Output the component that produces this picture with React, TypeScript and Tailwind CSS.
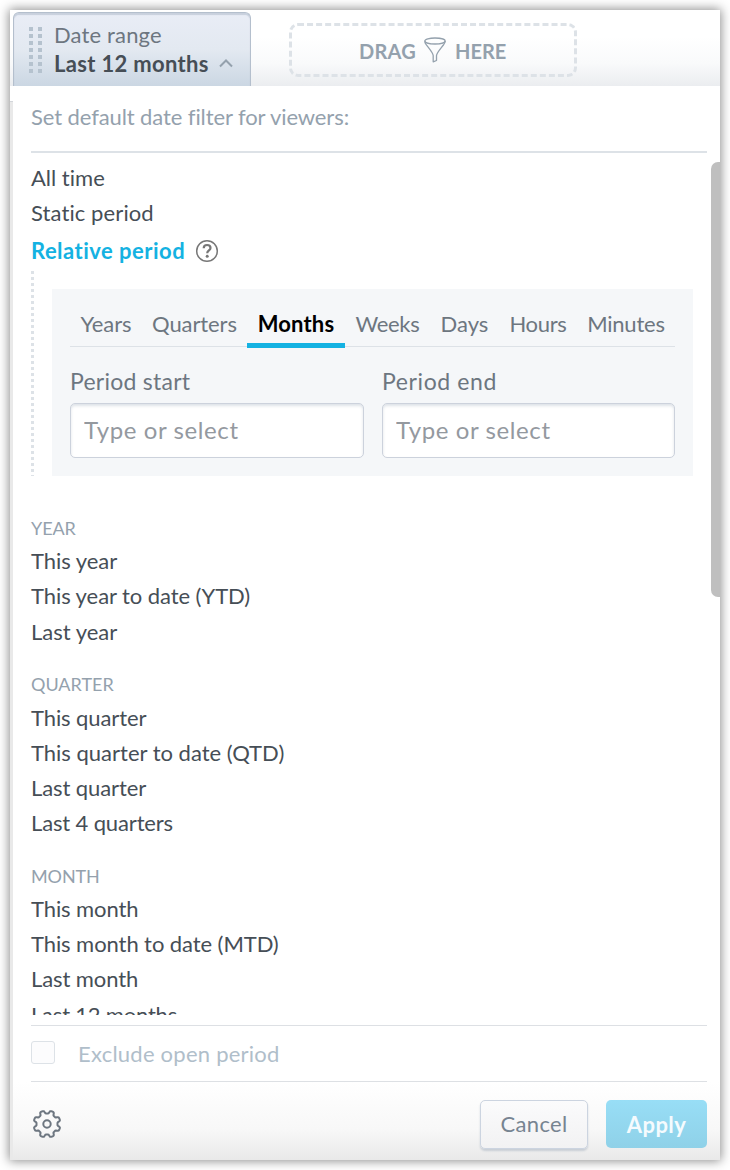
import React from 'react';

type Option = { label: string; track: string };
type Section = { title: string; track: string; options: Option[] };

const tabs = [
  { label: 'Years', box: 'w-[72px]', track: 'tracking-[-0.1px]' },
  { label: 'Quarters', box: 'w-[105px]', track: 'tracking-[-0.1px]' },
  { label: 'Months', box: 'w-[98px]', track: 'tracking-[0.15px]' },
  { label: 'Weeks', box: 'w-[85px]', track: 'tracking-[-0.3px]' },
  { label: 'Days', box: 'w-[69px]', track: '' },
  { label: 'Hours', box: 'w-[78px]', track: 'tracking-[-0.3px]' },
  { label: 'Minutes', box: 'w-[98px]', track: 'tracking-[-0.2px]' },
];

const sections: Section[] = [
  {
    title: 'YEAR',
    track: 'tracking-[-0.1px]',
    options: [
      { label: 'This year', track: 'tracking-[-0.05px]' },
      { label: 'This year to date (YTD)', track: 'tracking-[-0.07px]' },
      { label: 'Last year', track: '' },
    ],
  },
  {
    title: 'QUARTER',
    track: '',
    options: [
      { label: 'This quarter', track: 'tracking-[-0.1px]' },
      { label: 'This quarter to date (QTD)', track: '' },
      { label: 'Last quarter', track: 'tracking-[-0.1px]' },
      { label: 'Last 4 quarters', track: 'tracking-[-0.14px]' },
    ],
  },
  {
    title: 'MONTH',
    track: 'tracking-[-0.1px]',
    options: [
      { label: 'This month', track: 'tracking-[-0.1px]' },
      { label: 'This month to date (MTD)', track: 'tracking-[-0.08px]' },
      { label: 'Last month', track: 'tracking-[-0.1px]' },
      { label: 'Last 12 months', track: 'tracking-[-0.2px]' },
    ],
  },
];

function DragHandle() {
  return (
    <div className="grid grid-cols-2 gap-x-[5px] gap-y-[3px] self-start">
      {Array.from({ length: 14 }, (_, i) => (
        <span key={i} className="size-1 bg-[#b5c2ce]" />
      ))}
    </div>
  );
}

function Funnel() {
  return (
    <svg width="22" height="26" viewBox="0 0 22 26" fill="none" stroke="#94a1ad" strokeWidth="1.300" strokeLinejoin="round">
      <ellipse cx="11" cy="4" rx="10.2" ry="3" />
      <path d="M.8 4.2c0 1.6.7 2.500 1.600 3.700C4.800 11.200 8.800 15.500 9.200 18.500v6.300l3.300-1.300v-5c.5-3 4.500-7.200 6.900-10.500.9-1.200 1.800-2.200 1.800-3.900" />
    </svg>
  );
}

function Gear() {
  const points = Array.from({ length: 193 }, (_, i) => {
    const a = (i / 192) * Math.PI * 2;
    const wave = Math.tanh(2.6 * Math.cos(8 * a + Math.PI)) / Math.tanh(2.6);
    const r = 12 + 1.5 * wave;
    return `${(15 + r * Math.cos(a)).toFixed(2)},${(15 + r * Math.sin(a)).toFixed(2)}`;
  }).join(' ');
  return (
    <svg width="30" height="30" viewBox="0 0 30 30" fill="none" stroke="#6d7680" strokeWidth="2" strokeLinejoin="round">
      <polygon points={points} />
      <circle cx="15" cy="15" r="3.700" />
    </svg>
  );
}

function PeriodField({ label, box, track }: { label: string; box: string; track: string }) {
  return (
    <label className={`flex flex-col ${box}`}>
      <span className={`h-[35px] text-[23px] leading-[34px] text-[#6d7680] ${track}`}>{label}</span>
      <input
        placeholder="Type or select"
        className="mt-[4px] h-[55px] w-full rounded-[5px] border border-[#ccd2dc] bg-white px-[13px] pb-[2px] text-[24px] tracking-[0.6px] text-[#464e56] shadow-[inset_0_2px_3px_rgba(20,56,93,0.14)] outline-none placeholder:text-[#94999f]"
      />
    </label>
  );
}

export default function App() {
  return (
    <div className="h-[1170px] w-[730px] overflow-hidden bg-white p-[10px] font-['Lato','Liberation_Sans',sans-serif] text-[22px] text-[#464e56] [font-variant-ligatures:none]">
      <div className="flex h-[1150px] w-[710px] flex-col bg-white shadow-[0_0_10px_1px_rgba(0,0,0,0.45)]">
        <header className="flex h-[76px] shrink-0 items-start bg-linear-to-b from-white from-35% via-[#f9fafb] via-70% to-[#ebedf0] pl-[3px] pt-[2px]">
          <div className="flex h-[74px] w-[238px] rounded-t-[6px] border border-b-0 border-[#b4bfcd] bg-linear-to-b from-[#e9edf6] via-[#e3e9f1] to-[#cbd7e3] pl-[15px] pt-[14px] shadow-[inset_0_2px_1px_rgba(150,165,185,0.4)]">
            <DragHandle />
            <div className="ml-[12px] mt-[-7px] flex flex-col">
              <span className="h-[29px] leading-[29px] tracking-[0.15px] text-[#6d7680]">Date range</span>
              <div className="flex h-[29px] items-center">
                <span className="w-[154px] whitespace-nowrap font-bold leading-[29px] tracking-[0.32px]">Last 12 months</span>
                <svg className="ml-[11px]" width="14" height="9" viewBox="0 0 14 9" fill="none" stroke="#94a1ad" strokeWidth="2">
                  <path d="M1 7.500 7 1.500l6 6" />
                </svg>
              </div>
            </div>
          </div>
          <div className="ml-[38px] mt-[11px] flex h-[54px] w-[288px] items-center rounded-[9px] border-[3px] border-dashed border-[#dde2e7] pl-[67px] pt-[1px] text-[20px] font-bold text-[#94a1ad]">
            <span className="w-[57px] tracking-[0.2px]">DRAG</span>
            <span className="ml-[8px] mt-[-2px]"><Funnel /></span>
            <span className="ml-[9px]">HERE</span>
          </div>
        </header>

        <div className="flex min-h-0 flex-1">
          <div className="w-[3px] shrink-0 pt-[15px]">
            <div className="h-full border-t border-[#d3d6da] bg-[#e9e9e9]" />
          </div>
          <div className="flex min-w-0 flex-1 flex-col">
            <div className="mx-[18px] mr-[13px] h-[67px] shrink-0 border-b-2 border-[#dde2e7] pt-[13px] leading-[35px] tracking-[-0.1px] text-[#94a1ad]">
              Set default date filter for viewers:
            </div>

            <div className="flex h-[862px] shrink-0 justify-between">
              <div className="h-full overflow-hidden pl-[18px] pt-[7px]">
                <div className="h-[35px] leading-[35px]">All time</div>
                <div className="h-[36px] leading-[35px] tracking-[0.1px]">Static period</div>
                <div className="flex h-[40px] items-start font-bold leading-[39px] text-[#14b2e2]">
                  <span className="w-[164px] tracking-[0.48px]">Relative period</span>
                  <svg className="mt-[8px]" width="24" height="24" viewBox="0 0 24 24" fill="none" stroke="#777" strokeWidth="1.500">
                    <circle cx="12" cy="12" r="10.300" />
                    <path d="M8.700 9.200c0-2 1.400-3.200 3.400-3.200s3.400 1.200 3.400 2.900c0 2.400-3.300 2.600-3.300 5.300" strokeWidth="2.200" />
                    <circle cx="12.200" cy="17.300" r="1.500" fill="#777" stroke="none" />
                  </svg>
                </div>
                <div className="flex h-[205px]">
                  <div className="w-[3px] bg-[repeating-linear-gradient(to_bottom,#dde2e7_0,#dde2e7_3px,transparent_3px,transparent_6px)]" />
                  <div className="ml-[18px] mt-[18px] w-[641px] bg-[#f5f7f9] px-[18px]">
                    <div className="flex h-[58px] border-b border-[#dde2e7]">
                      {tabs.map((t) => (
                        <div
                          key={t.label}
                          className={
                            t.label === 'Months'
                              ? `${t.box} ${t.track} mb-[-2px] h-[59px] border-b-[5px] border-[#14b2e2] pt-[17px] text-center font-bold leading-[35px] text-black`
                              : `${t.box} ${t.track} pt-[17px] text-center leading-[35px] text-[#6d7680]`
                          }
                        >
                          {t.label}
                        </div>
                      ))}
                    </div>
                    <div className="mt-[17px] flex gap-[18px]">
                      <PeriodField label="Period start" box="w-[294px]" track="tracking-[0.25px]" />
                      <PeriodField label="Period end" box="w-[293px]" track="tracking-[0.6px]" />
                    </div>
                  </div>
                </div>
                <div className="mt-[35px] flex flex-col gap-[18.400px]">
                  {sections.map((s) => (
                    <div key={s.title}>
                      <div className={`h-[32.300px] text-[18px] leading-[35px] text-[#94a1ad] ${s.track}`}>{s.title}</div>
                      {s.options.map((o) => (
                        <div key={o.label} className={`h-[35.200px] leading-[35.200px] ${o.track}`}>
                          {o.label}
                        </div>
                      ))}
                    </div>
                  ))}
                </div>
              </div>
              <div className="mt-[9px] h-[435px] w-[9px] rounded-l-[7px] bg-[#bfbfbf]" />
            </div>

            <div className="ml-[18px] mr-[13px] mt-[10px] flex h-[57px] shrink-0 items-center border-y border-[#dde0e4] text-[#b0beca]">
              <span className="mb-[2px] h-[23px] w-[24px] rounded-[3px] border border-[#dde2e7] bg-[#fcfcfd]" />
              <span className="ml-[23px] tracking-[0.24px]">Exclude open period</span>
            </div>
            <footer className="flex flex-1 items-start bg-linear-to-b from-white via-[#f8f8f8] via-60% to-[#e9e9e9] pl-[19px] pr-[13px] pt-[18px]">
              <span className="mt-[9px]"><Gear /></span>
              <button className="ml-auto h-[49px] w-[108px] rounded-[5px] border border-[#ccd4e0] bg-linear-to-b from-[#fbfbfc] to-[#f2f2f3] pb-[2px] tracking-[0.3px] text-[#778491] shadow-[0_2px_2px_rgba(20,56,93,0.17)]">
                Cancel
              </button>
              <button className="ml-[18px] h-[48px] w-[101px] rounded-[5px] bg-linear-to-b from-[#98def6] to-[#8fd1e8] font-bold tracking-[0.4px] text-[#f5fbfe]">
                Apply
              </button>
            </footer>
          </div>
        </div>
      </div>
    </div>
  );
}
